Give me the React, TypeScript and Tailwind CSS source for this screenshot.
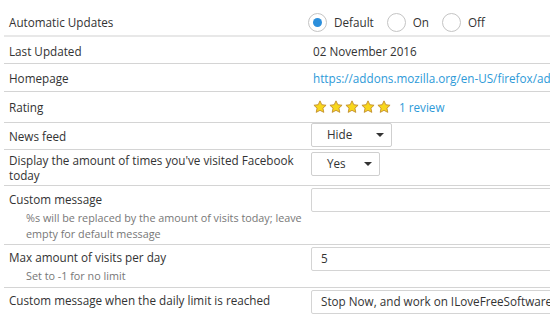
import React from 'react';

const Star = () => (
  <svg width="14" height="14" viewBox="0 0 24 24">
    <path
      d="M12 1.5l3.1 6.6 7.3.9-5.4 5 1.5 7.2L12 17.7l-6.5 3.5L7 14l-5.4-5 7.3-.9z"
      fill="#f8d71c"
      stroke="#c38f2c"
      strokeWidth="1.6"
      strokeLinejoin="round"
    />
  </svg>
);

const Radio = ({ checked, label }: { checked?: boolean; label: string }) => (
  <label className="flex items-center">
    <span className="w-[19px] h-[19px] rounded-full border border-[#c4c4c4] bg-white flex items-center justify-center">
      {checked && <span className="w-[9px] h-[9px] rounded-full bg-[#2b8fdc]" />}
    </span>
    <span className="ml-[7px]">{label}</span>
  </label>
);

const Select = ({ value, width }: { value: string; width: string }) => (
  <div className={`${width} h-[24px] border border-[#cfcfcf] rounded-[2px] bg-white flex items-center justify-between pl-[15px] pr-[7px]`}>
    <span>{value}</span>
    <span className="w-0 h-0 border-l-[4px] border-r-[4px] border-t-[4px] border-l-transparent border-r-transparent border-t-[#333]" />
  </div>
);

const TextInput = ({ value }: { value?: string }) => (
  <div className="w-[260px] h-[24px] border border-[#d4d4d4] rounded-[2px] bg-white flex items-center pl-[9px] shrink-0 whitespace-nowrap">
    {value}
  </div>
);

const App = () => {
  return (
    <div className="w-[550px] h-[316px] overflow-hidden bg-white font-['Open_Sans',sans-serif] text-[11.7px] text-[#333] pt-[8px] pl-[4px]">
      <div className="flex items-center h-[29px] pt-[2px] border-b-2 border-[#e8e8e8]">
        <div className="w-[307px] pl-[5px] shrink-0">Automatic Updates</div>
        <div className="flex items-center gap-[13px] ml-[-3px]">
          <Radio checked label="Default" />
          <Radio label="On" />
          <Radio label="Off" />
        </div>
      </div>

      <div className="flex items-center h-[27px] pt-[3px] border-b border-[#d4d4d4]">
        <div className="w-[307px] pl-[5px] shrink-0">Last Updated</div>
        <div className="pl-[2px]">02 November 2016</div>
      </div>

      <div className="flex items-center h-[28px] pt-[3px] border-b border-[#d4d4d4]">
        <div className="w-[307px] pl-[5px] shrink-0">Homepage</div>
        <div className="pl-[2px] text-[#2e9ad8] whitespace-nowrap">https://addons.mozilla.org/en-US/firefox/addon/facebook-visits-counter/</div>
      </div>

      <div className="flex items-center h-[31px] pt-[1px] border-b border-[#d4d4d4]">
        <div className="w-[307px] pl-[5px] shrink-0">Rating</div>
        <div className="flex items-center pl-[2px]">
          <div className="flex items-center gap-[2px]">
            <Star />
            <Star />
            <Star />
            <Star />
            <Star />
          </div>
          <span className="ml-[8px] text-[#2e9ad8]">1 review</span>
        </div>
      </div>

      <div className="flex items-start h-[27px] border-b border-[#d4d4d4]">
        <div className="w-[307px] pl-[5px] shrink-0 pt-[1px] leading-[24px]">News feed</div>
        <Select value="Hide" width="w-[81px]" />
      </div>

      <div className="flex items-start h-[36px] border-b border-[#d4d4d4]">
        <div className="w-[307px] pl-[5px] pr-[4px] shrink-0 pt-[3px] leading-[15px]">
          Display the amount of times you've visited Facebook today
        </div>
        <div className="mt-[2px]">
          <Select value="Yes" width="w-[69px]" />
        </div>
      </div>

      <div className="flex items-start h-[59px] border-b border-[#d4d4d4]">
        <div className="w-[307px] pl-[5px] shrink-0 pt-[5px] leading-[16px]">
          <div>Custom message</div>
          <div className="pl-[17px] mt-[3px] text-[10.8px] leading-[16px] text-[#777]">
            %s will be replaced by the amount of visits today; leave empty for default message
          </div>
        </div>
        <div className="mt-[2px]">
          <TextInput />
        </div>
      </div>

      <div className="flex items-start h-[43px] border-b border-[#d4d4d4]">
        <div className="w-[307px] pl-[5px] shrink-0 pt-[4px] leading-[16px]">
          <div>Max amount of visits per day</div>
          <div className="pl-[17px] mt-[3px] text-[10.8px] leading-[16px] text-[#777]">Set to -1 for no limit</div>
        </div>
        <div className="mt-[2px]">
          <TextInput value="5" />
        </div>
      </div>

      <div className="flex items-start h-[30px]">
        <div className="w-[307px] pl-[5px] shrink-0 pt-[4px] leading-[16px]">
          Custom message when the daily limit is reached
        </div>
        <div className="mt-[2px]">
          <TextInput value="Stop Now, and work on ILoveFreeSoftware.com" />
        </div>
      </div>
    </div>
  );
};

export default App;
